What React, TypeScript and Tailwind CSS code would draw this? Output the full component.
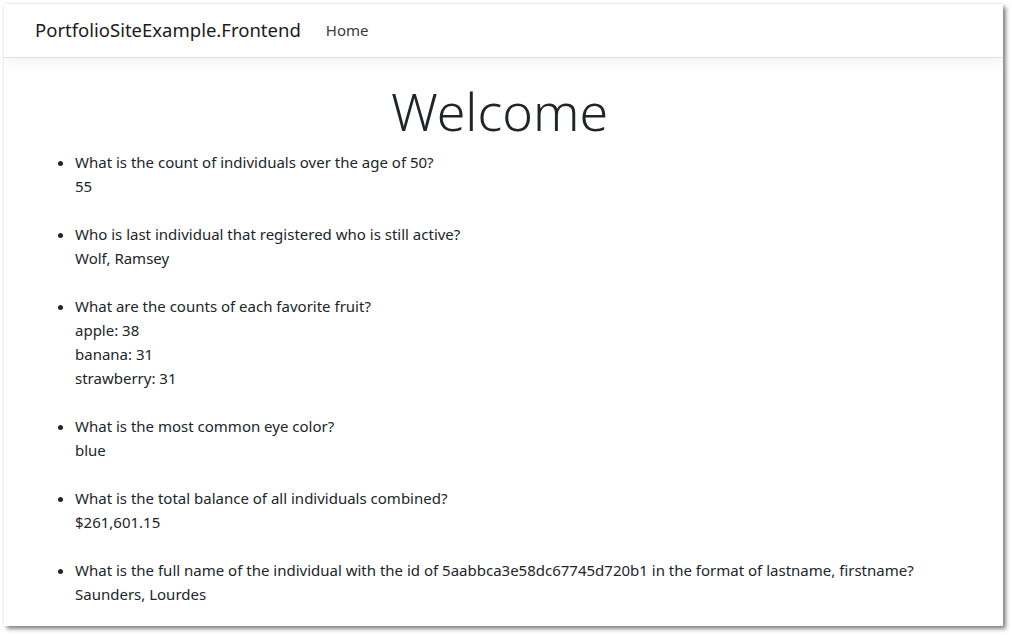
import React from "react";

const items: { q: string; a: string[] }[] = [
  { q: "What is the count of individuals over the age of 50?", a: ["55"] },
  { q: "Who is last individual that registered who is still active?", a: ["Wolf, Ramsey"] },
  { q: "What are the counts of each favorite fruit?", a: ["apple: 38", "banana: 31", "strawberry: 31"] },
  { q: "What is the most common eye color?", a: ["blue"] },
  { q: "What is the total balance of all individuals combined?", a: ["$261,601.15"] },
  {
    q: "What is the full name of the individual with the id of 5aabbca3e58dc67745d720b1 in the format of lastname, firstname?",
    a: ["Saunders, Lourdes"],
  },
];

export default function App() {
  return (
    <div className="w-[1012px] h-[635px] bg-white overflow-hidden" style={{ fontFamily: '"Noto Sans", sans-serif' }}>
      <div className="ml-[4px] mt-[4px] w-[999px] h-[622px] bg-white shadow-[0_0_4px_rgba(0,0,0,0.12),3px_3px_4px_rgba(0,0,0,0.45)] flex flex-col overflow-hidden">
        <nav className="h-[54px] shrink-0 flex items-center border-b border-[#e0e0e0] shadow-[0_4px_12px_rgba(0,0,0,0.05)] pl-[31px] relative z-10">
          <span className="text-[18.5px] text-[#1a1a1a] leading-none">PortfolioSiteExample.Frontend</span>
          <span className="ml-[25px] text-[15px] text-[#343a40] leading-none">Home</span>
        </nav>
        <main className="pl-[31px] pr-[31px] text-[#212529]">
          <h1 className="text-center text-[52px] font-light leading-[67px] mt-[19px] pr-[8px] text-[#212529]">Welcome</h1>
          <ul className="list-disc pl-[40px] mt-[6px] text-[15px] leading-[24px]">
            {items.map((it, i) => (
              <li key={i} className="mb-[24px]">
                <div>{it.q}</div>
                {it.a.map((l, j) => (
                  <div key={j}>{l}</div>
                ))}
              </li>
            ))}
          </ul>
        </main>
      </div>
    </div>
  );
}
